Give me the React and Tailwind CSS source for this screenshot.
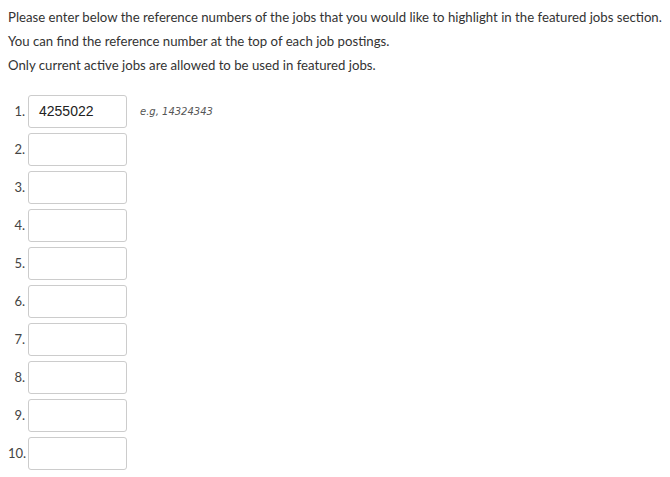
export default function App() {
  const rows = Array.from({ length: 10 }, (_, i) => i + 1);
  return (
    <div className="bg-white min-h-[477px] w-[670px] pl-2 pt-[5px] text-[#333]" style={{ fontFamily: '"Source Sans Pro", Lato, "Noto Sans", sans-serif' }}>
      <p className="text-[13.2px] leading-[24px]">Please enter below the reference numbers of the jobs that you would like to highlight in the featured jobs section.</p>
      <p className="text-[13.2px] leading-[24px]">You can find the reference number at the top of each job postings.</p>
      <p className="text-[13.2px] leading-[24px]">Only current active jobs are allowed to be used in featured jobs.</p>
      <div className="mt-[18px] flex flex-col gap-[5px]">
        {rows.map((n) => (
          <div key={n} className="flex items-center">
            <span className="w-[17px] text-right text-[13px] text-[#444]">{n}.</span>
            <div className="ml-[3px] h-[33px] w-[99px] rounded-[3px] border border-[#ccc] px-[10px] flex items-center text-[14px] text-[#222]" style={{ fontFamily: '"Liberation Sans", Arial, sans-serif' }}>
              {n === 1 ? '4255022' : ''}
            </div>
            {n === 1 && (
              <span className="ml-[13px] text-[10px] italic text-[#555]" style={{ fontFamily: '"DejaVu Sans", Verdana, sans-serif' }}>e.g, 14324343</span>
            )}
          </div>
        ))}
      </div>
    </div>
  );
}
